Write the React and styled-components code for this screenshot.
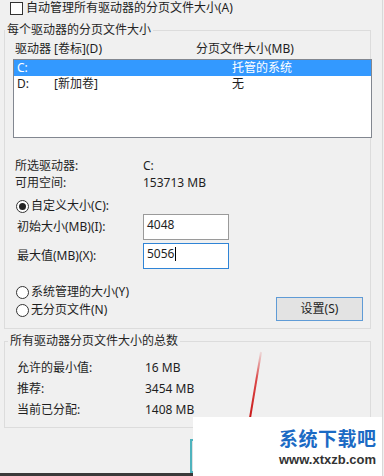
import React from 'react'
import styled, { createGlobalStyle } from 'styled-components';

const GlobalStyle = createGlobalStyle`
  html, body { margin: 0; padding: 0; background: #f0f0f0; }
  body { font-family: "Noto Sans", "Noto Sans CJK SC", sans-serif; font-size: 12px; color: #1e1e1e; }
`;

const drives = [
  { letter: 'C:', label: '', size: '托管的系统', selected: true },
  { letter: 'D:', label: '[新加卷]', size: '无' },
];

const totals = [
  ['允许的最小值:', '16 MB'],
  ['推荐:', '3454 MB'],
  ['当前已分配:', '1408 MB'],
];

function App() {
  return (
    <Page>
      <GlobalStyle />
      <CheckRow>
        <CheckBox />
        <span>自动管理所有驱动器的分页文件大小(A)</span>
      </CheckRow>

      <Group $top={6}>
        <Legend>每个驱动器的分页文件大小</Legend>
        <HeaderRow>
          <span>驱动器 [卷标](D)</span>
          <span>分页文件大小(MB)</span>
        </HeaderRow>
        <ListBox>
          {drives.map((d) => (
            <DriveRow key={d.letter} $selected={d.selected}>
              <DriveLetter>{d.letter}</DriveLetter>
              <DriveLabel>{d.label}</DriveLabel>
              <span>{d.size}</span>
            </DriveRow>
          ))}
        </ListBox>

        <InfoList>
          <InfoRow>
            <InfoLabel>所选驱动器:</InfoLabel>
            <span>C:</span>
          </InfoRow>
          <InfoRow>
            <InfoLabel>可用空间:</InfoLabel>
            <span>153713 MB</span>
          </InfoRow>
        </InfoList>

        <RadioRow $top={7}>
          <Radio $checked />
          <span>自定义大小(C):</span>
        </RadioRow>
        <FieldRow>
          <FieldLabel>初始大小(MB)(I):</FieldLabel>
          <TextBox>4048</TextBox>
        </FieldRow>
        <FieldRow $top={3}>
          <FieldLabel>最大值(MB)(X):</FieldLabel>
          <TextBox $focused>5056<Caret /></TextBox>
        </FieldRow>

        <OptionsRow>
          <RadioColumn>
            <RadioRow>
              <Radio />
              <span>系统管理的大小(Y)</span>
            </RadioRow>
            <RadioRow>
              <Radio />
              <span>无分页文件(N)</span>
            </RadioRow>
          </RadioColumn>
          <SetButton>设置(S)</SetButton>
        </OptionsRow>
      </Group>

      <Group $top={4} $legendLeft={3}>
        <Legend>所有驱动器分页文件大小的总数</Legend>
        <TotalsList>
          {totals.map(([k, v]) => (
            <TotalRow key={k}>
              <TotalLabel>{k}</TotalLabel>
              <span>{v}</span>
            </TotalRow>
          ))}
        </TotalsList>
      </Group>

      <Footer>
        <OkButton />
      </Footer>
      <TaskStrip />

      <Arrow width="30" height="80" viewBox="0 0 30 80">
        <defs>
          <linearGradient id="fade" x1="0" y1="0" x2="0" y2="1">
            <stop offset="0" stopColor="#d61f1f" stopOpacity="0.1" />
            <stop offset="0.4" stopColor="#d61f1f" stopOpacity="0.8" />
            <stop offset="1" stopColor="#c81818" stopOpacity="1" />
          </linearGradient>
        </defs>
        <path d="M20 2 L9 68" stroke="url(#fade)" strokeWidth="2" fill="none" />
      </Arrow>

      <Watermark>
        <MarkTitle>系统下载吧</MarkTitle>
        <MarkUrl>www.xtxzb.com</MarkUrl>
      </Watermark>
    </Page>
  )
}

const Page = styled.div`
  position: relative;
  width: 383px;
  height: 476px;
  overflow: hidden;
  border-right: 1px solid #d8d8d8;
  box-sizing: border-box;
  line-height: 16px;
`;

const CheckRow = styled.div`
  display: flex;
  align-items: center;
  gap: 3px;
  height: 16px;
  padding-left: 10px;
`;

const CheckBox = styled.span`
  width: 11px;
  height: 11px;
  border: 1px solid #333;
  background: #fff;
`;

const Group = styled.fieldset`
  margin: ${(p) => p.$top}px 0 0 4px;
  padding: 0 0 7px;
  width: 367px;
  box-sizing: border-box;
  border: 1px solid #dcdcdc;
  min-width: 0;
  legend { margin-left: ${(p) => p.$legendLeft || 0}px; }
`;

const Legend = styled.legend`
  padding: 0 2px;
  line-height: 16px;
  color: #262626;
`;

const HeaderRow = styled.div`
  display: grid;
  grid-template-columns: 181px 1fr;
  margin-top: 3px;
  padding-left: 10px;
  height: 16px;
`;

const ListBox = styled.div`
  margin: 2px 0 0 8px;
  width: 359px;
  height: 79px;
  box-sizing: border-box;
  border: 1px solid #828790;
  background: #fff;
`;

const DriveRow = styled.div`
  display: grid;
  grid-template-columns: 37px 178px 1fr;
  height: 16px;
  padding-left: 3px;
  background: ${(p) => (p.$selected ? '#3399ff' : 'transparent')};
  color: ${(p) => (p.$selected ? '#fff' : '#1e1e1e')};
`;

const DriveLetter = styled.span``;
const DriveLabel = styled.span``;

const InfoList = styled.div`
  margin-top: 19px;
  padding-left: 10px;
`;

const InfoRow = styled.div`
  display: grid;
  grid-template-columns: 128px 1fr;
  height: 17px;
  align-items: center;
`;

const InfoLabel = styled.span`
  color: #262626;
`;

const RadioRow = styled.div`
  display: flex;
  align-items: center;
  gap: 2px;
  height: 16px;
  margin-top: ${(p) => p.$top || 0}px;
  padding-left: 11px;
`;

const Radio = styled.span`
  position: relative;
  width: 11px;
  height: 11px;
  border: 1px solid #333;
  border-radius: 50%;
  background: #fff;
  &::after {
    content: '';
    display: ${(p) => (p.$checked ? 'block' : 'none')};
    position: absolute;
    left: 2px;
    top: 2px;
    width: 7px;
    height: 7px;
    border-radius: 50%;
    background: #222;
  }
`;

const FieldRow = styled.div`
  display: grid;
  grid-template-columns: 126px 86px;
  align-items: center;
  margin-top: ${(p) => p.$top || 0}px;
  padding-left: 12px;
`;

const FieldLabel = styled.span``;

const TextBox = styled.div`
  height: 26px;
  box-sizing: border-box;
  border: 1px solid ${(p) => (p.$focused ? '#2f84d6' : '#9a9a9a')};
  background: #fff;
  padding: 2px 3px 0;
  display: flex;
  align-items: flex-start;
`;

const Caret = styled.span`
  width: 1px;
  height: 14px;
  margin-top: 1px;
  margin-left: 1px;
  background: #000;
`;

const OptionsRow = styled.div`
  display: flex;
  justify-content: space-between;
  align-items: flex-start;
  margin-top: 15px;
  padding-right: 7px;
`;

const RadioColumn = styled.div`
  display: flex;
  flex-direction: column;
  gap: 2px;
`;

const SetButton = styled.div`
  margin-top: 13px;
  width: 87px;
  height: 24px;
  box-sizing: border-box;
  border: 1px solid #5f9bd6;
  background: #e3e3e3;
  display: flex;
  align-items: center;
  justify-content: center;
`;

const TotalsList = styled.div`
  margin-top: 8px;
  padding-left: 12px;
`;

const TotalRow = styled.div`
  display: grid;
  grid-template-columns: 128px 1fr;
  height: 21px;
  align-items: center;
`;

const TotalLabel = styled.span``;

const Footer = styled.div`
  height: 45px;
  padding: 11px 0 0 190px;
  box-sizing: border-box;
`;

const OkButton = styled.div`
  width: 90px;
  height: 34px;
  box-sizing: border-box;
  border: 2px solid #4fb3bd;
  background: #e1e1e1;
`;

const TaskStrip = styled.div`
  height: 4px;
  background: #3a3a3a;
`;

const Arrow = styled.svg`
  position: absolute;
  left: 241px;
  top: 350px;
`;

const Watermark = styled.div`
  position: absolute;
  left: 193px;
  top: 417px;
  right: 0;
  bottom: 0;
  background: #fff;
  padding: 10px 0 0 86px;
  display: flex;
  flex-direction: column;
  gap: 3px;
`;

const MarkTitle = styled.div`
  font-family: "Noto Sans CJK SC", sans-serif;
  font-weight: 700;
  font-size: 19px;
  line-height: 22px;
  letter-spacing: 0.5px;
  color: #1b6ac4;
`;

const MarkUrl = styled.div`
  font-family: "Liberation Sans", Arial, sans-serif;
  font-weight: 700;
  font-size: 13px;
  line-height: 16px;
  color: #333;
`;

export default App;
